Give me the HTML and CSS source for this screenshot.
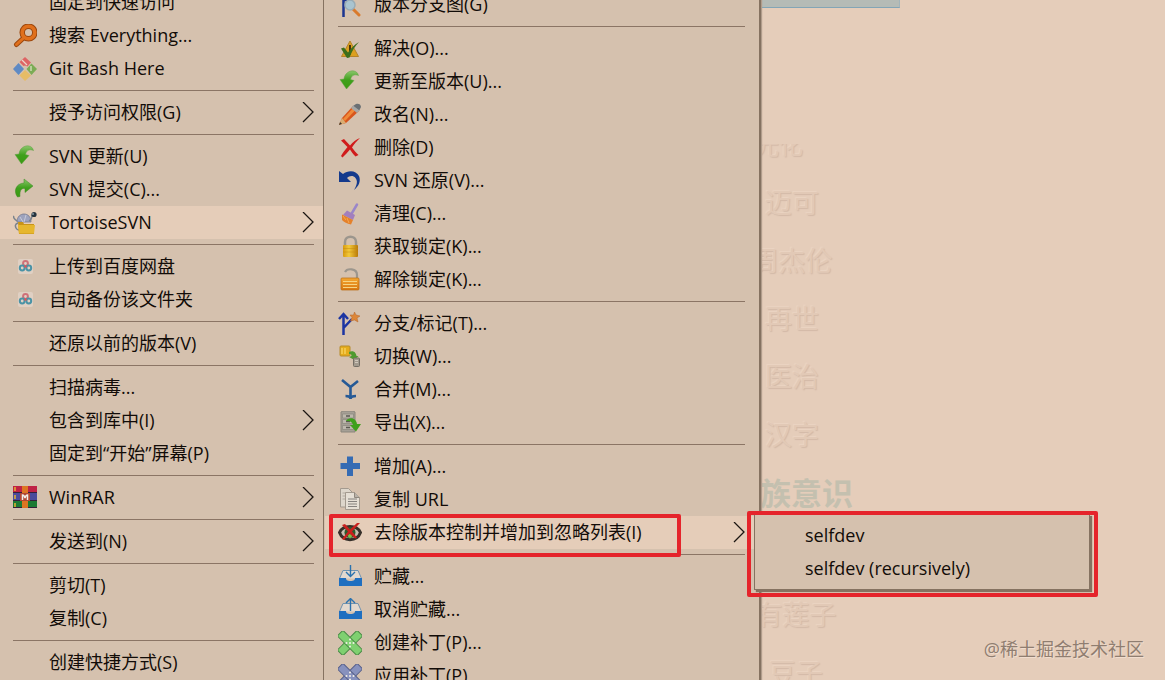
FILE: index.html
```html
<!DOCTYPE html>
<html lang="zh-CN">
  <head>
    <meta charset="utf-8" />
    <meta name="viewport" content="width=device-width, initial-scale=1" />
    <link rel="stylesheet" href="styles.css">
    <title>TortoiseSVN</title>
  </head>
  <body>
    <!-- Shared icons -->
    <svg class="sprite" aria-hidden="true">
      <defs>
        <linearGradient id="green" x1="0" y1="0" x2="0" y2="1">
          <stop offset="0" stop-color="#8cc66c" />
          <stop offset="0.5" stop-color="#3fa01c" />
          <stop offset="1" stop-color="#3c9a12" />
        </linearGradient>
        <linearGradient id="gold" x1="0" y1="0" x2="1" y2="0">
          <stop offset="0" stop-color="#d79a10" />
          <stop offset="0.4" stop-color="#f3c93a" />
          <stop offset="1" stop-color="#b97a08" />
        </linearGradient>
        <linearGradient id="orange" x1="0" y1="0" x2="0" y2="1">
          <stop offset="0" stop-color="#f3a733" />
          <stop offset="1" stop-color="#d9780f" />
        </linearGradient>
      </defs>
      <symbol id="chevron" viewBox="0 0 12 22">
        <path d="M1 0l10 10L1 20" fill="none" stroke="#1c1612" stroke-width="1.3" />
      </symbol>
      <symbol id="update" viewBox="0 0 24 24">
        <path d="M2 9.500l4-.5C6.500 4 11 0 16 1c2 .3 3.500 1.500 4.500 4.500C17 4 13.500 5 12.500 9.500l3.500 1L8.500 19z" fill="url(#green)" stroke="#5ea045" stroke-width=".5" />
      </symbol>
      <symbol id="commit" viewBox="0 0 24 24">
        <path d="M11 1l9 7-8 6.500v-4C8.500 10 6.500 12 7 18.500L4.500 19C0 13 3 5.500 11 5z" fill="url(#green)" stroke="#3d8a24" stroke-width=".5" />
      </symbol>
      <symbol id="netdisk" viewBox="0 0 24 24">
        <rect x="5" y="4" width="15" height="15" rx="2" fill="#e0d0c3" />
        <g fill="none" stroke-width="2">
          <circle cx="12.500" cy="8.500" r="2.400" stroke="#cf7078" />
          <circle cx="9.200" cy="13" r="2.400" stroke="#4a93a6" />
          <circle cx="15.800" cy="13" r="2.400" stroke="#4a93a6" />
        </g>
        <circle cx="12.500" cy="11.500" r="1.300" fill="#d9545c" />
      </symbol>
      <symbol id="patch" viewBox="0 0 24 24">
        <rect x="8" y="-2" width="8" height="28" rx="1.500" transform="rotate(45 12 12)" />
        <rect x="8" y="-2" width="8" height="28" rx="1.500" transform="rotate(-45 12 12)" />
        <g fill="#f4efe8" stroke="none">
          <circle cx="12" cy="8.500" r="1" /><circle cx="8.500" cy="12" r="1" /><circle cx="12" cy="12" r="1" />
          <circle cx="15.500" cy="12" r="1" /><circle cx="12" cy="15.500" r="1" />
        </g>
      </symbol>
    </svg>

    <!-- Wallpaper behind the menus -->
    <main class="desktop">
      <div class="tab"></div>
      <ul class="words">
        <li class="words__cut">光化</li>
        <li>迈可</li>
        <li>周杰伦</li>
        <li>再世</li>
        <li>医治</li>
        <li>汉字</li>
        <li class="words__strong">族意识</li>
        <li class="words__gap"></li>
        <li class="words__shift">有莲子</li>
        <li class="words__shift">豆子</li>
      </ul>
      <p class="credit">@稀土掘金技术社区</p>
    </main>

    <!-- Explorer menu -->
    <ul class="menu menu--main">
      <li><button type="button"><span class="icon"></span>固定到快速访问</button></li>
      <li><button type="button">
        <svg class="icon" viewBox="0 0 24 24">
          <path d="M10.500 14L3.500 20.500" stroke="#9c480f" stroke-width="5" stroke-linecap="round" />
          <circle cx="15.500" cy="8.500" r="6.300" fill="none" stroke="#9c480f" stroke-width="5.500" />
          <path d="M10.500 14L3.500 20.500" stroke="#e0701c" stroke-width="3" stroke-linecap="round" />
          <circle cx="15.500" cy="8.500" r="6.300" fill="none" stroke="#e0701c" stroke-width="3.500" />
        </svg>搜索 Everything...</button></li>
      <li><button type="button">
        <svg class="icon" viewBox="0 0 24 24">
          <path d="M6.500 5L12 0l6 5.500-3.500 4L12 8.500 10.500 9z" fill="#de6464" />
          <path d="M5.500 6l5.500 6-5.500 6L0 12z" fill="#5f8ac4" />
          <path d="M18.500 6.500l5.500 5.500-5.500 6L13.500 12z" fill="#7bac55" />
          <path d="M12 13l6 5.500L12 24l-5.500-5.500z" fill="#e6bc66" />
          <path d="M9 3l5 5" fill="none" stroke="#ecd5c8" stroke-width="1.300" />
          <path d="M18 9v5" fill="none" stroke="#dce0c4" stroke-width="1.300" />
        </svg>Git Bash Here</button></li>
      <li class="separator"></li>
      <li><button type="button"><span class="icon"></span>授予访问权限(G)<svg class="chevron"><use href="#chevron" /></svg></button></li>
      <li class="separator"></li>
      <li><button type="button"><svg class="icon"><use href="#update" /></svg>SVN 更新(U)</button></li>
      <li><button type="button"><svg class="icon"><use href="#commit" /></svg>SVN 提交(C)...</button></li>
      <li class="active"><button type="button">
        <svg class="icon" viewBox="0 0 24 24">
          <path d="M4 11C4 5 8 3 11 3c4 0 7 3 7 8z" fill="#9ea3bd" stroke="#73788e" stroke-width=".8" />
          <path d="M7 6l3 5m3-7l-2 7" stroke="#c7cadb" />
          <path d="M4 10C1 8 0 6 1 5M5 12c-3 1-3 3-2 5 1 2 2 2 3 2M16 10c2-1 3-4 3-6" fill="none" stroke="#7b838c" stroke-width="1.500" />
          <circle cx="21" cy="3.500" r="2.600" fill="#26343f" />
          <circle cx="20" cy="3" r="1" fill="#8296a2" />
          <path d="M5 11h5l1 2h10v10H6z" fill="#c99418" />
          <path d="M5 14h17l-1 8.500H6z" fill="#e6b62e" />
        </svg>TortoiseSVN<svg class="chevron"><use href="#chevron" /></svg></button></li>
      <li class="separator"></li>
      <li><button type="button"><svg class="icon"><use href="#netdisk" /></svg>上传到百度网盘</button></li>
      <li><button type="button"><svg class="icon"><use href="#netdisk" /></svg>自动备份该文件夹</button></li>
      <li class="separator"></li>
      <li><button type="button"><span class="icon"></span>还原以前的版本(V)</button></li>
      <li class="separator"></li>
      <li><button type="button"><span class="icon"></span>扫描病毒...</button></li>
      <li><button type="button"><span class="icon"></span>包含到库中(I)<svg class="chevron"><use href="#chevron" /></svg></button></li>
      <li><button type="button"><span class="icon"></span>固定到“开始”屏幕(P)</button></li>
      <li class="separator"></li>
      <li><button type="button">
        <svg class="icon" viewBox="0 0 24 24">
          <rect width="24" height="7" fill="#bf2245" />
          <rect y="7" width="24" height="8" fill="#4a4a9c" />
          <rect y="15" width="24" height="7" fill="#1c7a34" />
          <path d="M0 6.500h24M0 14.500h24M0 21.500h24" stroke="#33203a" />
          <path d="M2 1v4m0 4v4m0 4v4" stroke="#e5b431" stroke-width="1.500" />
          <rect x="9" width="6" height="22" fill="#dd7522" />
          <rect x="7" y="7" width="10" height="8" fill="#b14632" />
          <path d="M9.500 14V9c1.500 0 2 1 2.500 3 .5-2 1-3 2.500-3v5" fill="none" stroke="#f1eee9" stroke-width="1.500" />
        </svg>WinRAR<svg class="chevron"><use href="#chevron" /></svg></button></li>
      <li class="separator"></li>
      <li><button type="button"><span class="icon"></span>发送到(N)<svg class="chevron"><use href="#chevron" /></svg></button></li>
      <li class="separator"></li>
      <li><button type="button"><span class="icon"></span>剪切(T)</button></li>
      <li><button type="button"><span class="icon"></span>复制(C)</button></li>
      <li class="separator"></li>
      <li><button type="button"><span class="icon"></span>创建快捷方式(S)</button></li>
    </ul>

    <!-- TortoiseSVN menu -->
    <ul class="menu menu--svn">
      <li><button type="button">
        <svg class="icon" viewBox="0 0 24 24">
          <path d="M5.500 0v24M5 7h10M12 0v5" fill="none" stroke="#1c3590" stroke-width="2.500" />
          <path d="M15 16l6 6" stroke="#d97a2c" stroke-width="3" stroke-linecap="round" />
          <circle cx="12" cy="12" r="5" fill="#a9c4d0" stroke="#9aacb5" stroke-width="1.500" />
        </svg>版本分支图(G)</button></li>
      <li class="separator"></li>
      <li><button type="button">
        <svg class="icon" viewBox="0 0 24 24">
          <path d="M12 4l8.500 15.500h-17z" fill="#dba021" stroke="#b5832a" />
          <path d="M12 8v6m0 1.500v2" stroke="#4a340c" stroke-width="2" />
          <path d="M3 11.500l3-1 4 5C13 11 16 8 21 5c-4 4-7 9-9.500 15.500L9 21z" fill="#3c6e1b" />
        </svg>解决(O)...</button></li>
      <li><button type="button"><svg class="icon"><use href="#update" /></svg>更新至版本(U)...</button></li>
      <li><button type="button">
        <svg class="icon" viewBox="0 0 24 24">
          <path d="M1 22l3-7L15 3l6 5L8 20z" fill="#d8551c" />
          <path d="M5 16L16 4l2.500 2L7 18z" fill="#f08a3a" />
          <path d="M15 3l3-2c2-1 5 0 5 3l-2 4z" fill="#6b7074" />
          <path d="M13 5l2-2.500 6.500 5L19 10z" fill="#a6a7a6" />
          <path d="M1 22l3-7 4 5z" fill="#d9ae73" />
          <path d="M1 22l1-3 2 1.800z" fill="#3c342b" />
        </svg>改名(N)...</button></li>
      <li><button type="button">
        <svg class="icon" viewBox="0 0 24 24">
          <path d="M3 4.500L6 3c2 2 4 4.500 6 6.500C15 6 18 3.500 22 2c-3 3-6 6-8 9.500 2 3 4 5 6.500 7.500l-3 1.500C15 18 13.500 16 12 13.500 9.500 16.500 7 19 4.500 21.500L3 20c2-3.500 4-6 6.500-9C7 8.500 5 6.500 3 4.500z" fill="#d01c1c" />
        </svg>删除(D)</button></li>
      <li><button type="button">
        <svg class="icon" viewBox="0 0 24 24">
          <path d="M1 2l4 3c5-4 13-4 16 2 2 5 0 10-5 14 3-5 4-9 1.500-12C15 6 11 7 9 9l4 4H1z" fill="#153a8c" />
        </svg>SVN 还原(V)...</button></li>
      <li><button type="button">
        <svg class="icon" viewBox="0 0 24 24">
          <path d="M19 2.500L14 11" stroke="#9a86c9" stroke-width="2.500" stroke-linecap="round" />
          <path d="M9 8.500l8 4.500-2 5-10-5z" fill="#a27fbe" />
          <path d="M4 12.500l11 5.500-2 4.500C9 22 6 20 4 18z" fill="#e5812a" />
          <path d="M5 14l3 4m1-2l2 5" stroke="#f3a752" />
        </svg>清理(C)...</button></li>
      <li><button type="button">
        <svg class="icon" viewBox="0 0 24 24">
          <path d="M7 12V7c0-7 11-7 11 0v5" fill="none" stroke="#9c968d" stroke-width="2.500" />
          <rect x="5" y="10" width="15" height="12" rx="1" fill="url(#gold)" />
          <path d="M5 13.500h15M5 17h15" stroke="#c4890e" stroke-width=".5" />
        </svg>获取锁定(K)...</button></li>
      <li><button type="button">
        <svg class="icon" viewBox="0 0 24 24">
          <path d="M7 4c2-4 12-4 12 3v4" fill="none" stroke="#9c968d" stroke-width="2.200" />
          <rect x="3" y="10" width="18" height="12" rx="1" fill="url(#orange)" stroke="#ba6a10" stroke-width=".7" />
          <path d="M5 13.500h14M5 16.500h14M5 19.500h14" stroke="#f6d483" />
        </svg>解除锁定(K)...</button></li>
      <li class="separator"></li>
      <li><button type="button">
        <svg class="icon" viewBox="0 0 24 24">
          <path d="M5.500 23V2M1 7l4.500-5L10 7M5.500 16L14 7" fill="none" stroke="#1c35a2" stroke-width="2.500" />
          <path d="M16.500 0l1.500 3 4 1-3 2 1 4-3.500-2-4 1 1.500-3.500L12 3h3.500z" fill="#dd8638" stroke="#b5642b" stroke-width=".5" />
        </svg>分支/标记(T)...</button></li>
      <li><button type="button">
        <svg class="icon" viewBox="0 0 24 24">
          <rect x="2" y="1" width="10" height="10" rx="1" fill="#e5ac1c" stroke="#b68b2a" />
          <path d="M4 3v6m3-6v6" stroke="#f6cf5b" stroke-width="1.500" />
          <path d="M11 7c5-2 7 1 7.500 4h2L16.500 15 11 12l2.500-1c0-2-1-2-2.500-2z" fill="#4e9a30" />
          <rect x="15.500" y="13" width="6" height="8.500" rx="1" fill="#a29a8e" stroke="#746e65" />
          <path d="M17 15.500h3m-3 2h3" stroke="#cfc7bc" />
        </svg>切换(W)...</button></li>
      <li><button type="button">
        <svg class="icon" viewBox="0 0 24 24">
          <path d="M4 2l8.500 7L20 3M12.500 8v13M7.500 18c3 0 5 1 5 3 0-2 2-3 5.500-3" fill="none" stroke="#265a96" stroke-width="2.600" />
        </svg>合并(M)...</button></li>
      <li><button type="button">
        <svg class="icon" viewBox="0 0 24 24">
          <path d="M3 1l2-1h10l2 1v20H3z" fill="#a59f95" stroke="#8b867c" />
          <path d="M4.500 3h11v4h-11zm0 5.500h11v4h-11zm0 6h11v4h-11z" fill="#bdb7ac" stroke="#8b867c" stroke-width=".7" />
          <path d="M8 5h4m-4 5.500h4m-4 6h4" stroke="#5a5750" stroke-width="1.500" />
          <path d="M8 10c2-4 10-4 11 3h4l-5 7.500-6-6.500h3c-1-4-4-4-7-4z" fill="#3fa01c" />
        </svg>导出(X)...</button></li>
      <li class="separator"></li>
      <li><button type="button">
        <svg class="icon" viewBox="0 0 24 24">
          <path d="M9 1.500h6V8h7v6h-7v7H9v-7H2.500V8H9z" fill="#356bb3" />
        </svg>增加(A)...</button></li>
      <li><button type="button">
        <svg class="icon" viewBox="0 0 24 24">
          <path d="M2.500 .5h8l4 4V19h-12z" fill="#ddd6cb" stroke="#a39a8f" />
          <path d="M4.500 5h6m-6 3h4m-4 3h4" stroke="#b0a99f" />
          <path d="M7.500 4.500h9l5 5v12h-14z" fill="#e5dfd5" stroke="#a39a8f" />
          <path d="M16.500 4.500v5h5" fill="#b8b1a8" stroke="#8f877d" />
          <path d="M10 11h9m-9 2.500h9M10 16h9m-9 2.500h9" stroke="#85827f" />
        </svg>复制 URL</button></li>
      <li class="active"><button type="button">
        <svg class="icon" viewBox="0 0 24 24">
          <path d="M1.500 11.500C5 3.500 19 3.500 22.500 11.500 19 21 5 21 1.500 11.500z" fill="#c7bcb0" stroke="#37302a" stroke-width="3" />
          <circle cx="12" cy="11.500" r="5.500" fill="#2b5c2d" />
          <circle cx="12" cy="15" r="2" fill="#7ac04b" />
          <path d="M4 4l3-1 5 5.500L19 2h3l-8 8.500 5 6-2 1-5.500-5L6 19l-2-1 6-7.500z" fill="#c9201e" />
        </svg>去除版本控制并增加到忽略列表(I)<svg class="chevron"><use href="#chevron" /></svg></button>

        <!-- Ignore menu -->
        <ul class="menu menu--ignore">
          <li><button type="button"><span class="icon"></span>selfdev</button></li>
          <li><button type="button"><span class="icon"></span>selfdev (recursively)</button></li>
        </ul>
      </li>
      <li class="separator"></li>
      <li><button type="button">
        <svg class="icon" viewBox="0 0 24 24">
          <path d="M1.500 13.500L5 5.500h15l3.500 8" fill="#e2d9cf" stroke="#6f93b0" />
          <path d="M1 13h7c0 2 1 3 4.500 3s4.500-1 4.500-3h7v8H1z" fill="#1f6fc0" />
          <path d="M12.500 0v11M8 7l4.500 4.500L17 7" fill="none" stroke="#2a72ae" stroke-width="1.400" />
        </svg>贮藏...</button></li>
      <li><button type="button">
        <svg class="icon" viewBox="0 0 24 24">
          <path d="M1.500 13.500L5 5.500h15l3.500 8" fill="#e2d9cf" stroke="#6f93b0" />
          <path d="M1 13h7c0 2 1 3 4.500 3s4.500-1 4.500-3h7v8H1z" fill="#1f6fc0" />
          <path d="M12.500 13V1M8 5L12.500 .5 17 5" fill="none" stroke="#2a72ae" stroke-width="1.400" />
        </svg>取消贮藏...</button></li>
      <li><button type="button"><svg class="icon icon--green"><use href="#patch" /></svg>创建补丁(P)...</button></li>
      <li><button type="button"><svg class="icon icon--blue"><use href="#patch" /></svg>应用补丁(P)</button></li>
    </ul>

    <!-- Red marks -->
    <div class="mark mark--item"></div>
    <div class="mark mark--list"></div>
  </body>
</html>
```
FILE: styles.css
```css
*, *::before, *::after {
  box-sizing: border-box;
}

html, body {
  margin: 0;
  height: 100%;
  overflow: hidden;
}

body {
  position: relative;
  background: #e5cdba;
  color: #120c08;
  font-family: 'Open Sans', 'Noto Sans CJK SC', sans-serif;
  font-size: 18px;
}

ul {
  margin: 0;
  padding: 0;
  list-style: none;
}

.sprite {
  position: absolute;
  width: 0;
  height: 0;
}

/* Wallpaper */
.desktop {
  height: 100%;
  padding-left: 732px;
}

.tab {
  width: 168px;
  height: 8px;
  background: #b5bbb6;
  border-bottom: 1px solid #83a5b6;
  border-right: 1px solid #a3b4ba;
}

.words {
  width: 120px;
  padding-top: 108px;
  color: #e2c9b6;
  font-size: 27px;
  line-height: 58px;
  text-align: center;
  text-shadow: 1px 1px 1px #d3baa8, -1px -1px 1px #ead4c3;
}

.words li {
  height: 58px;
  white-space: nowrap;
}

/* Only the foot of the first word shows */
.words .words__cut {
  height: 46px;
  margin-bottom: 12px;
  padding: 17px 26px 0 0;
  font-size: 24px;
  line-height: 24px;
  clip-path: inset(28px 0 0 0);
}

.words .words__strong {
  padding-left: 28px;
  color: #c4c0af;
  font-size: 31px;
  font-weight: 700;
  text-shadow: none;
}

.words .words__gap {
  height: 64px;
}

.words .words__shift {
  padding-left: 8px;
}

.credit {
  position: absolute;
  right: 21px;
  bottom: 18px;
  margin: 0;
  color: #8f7d70;
  font-size: 18px;
  line-height: 26px;
  text-shadow: 1px 1px 0 #f1ddce;
}

/* Menus */
.menu {
  position: absolute;
  background: #d5c1ae;
}

.menu li {
  position: relative;
}

.menu button {
  display: flex;
  align-items: center;
  width: 100%;
  padding: 0 9px 0 13px;
  border: 0;
  background: none;
  color: inherit;
  font: inherit;
  line-height: 33px;
  text-align: left;
  white-space: nowrap;
}

.menu .active > button {
  background: #e5cdb9;
}

.menu .separator {
  height: 11px;
  padding: 5px 9px 0 13px;
}

.separator::before {
  content: '';
  display: block;
  border-top: 1px solid #8b7565;
}

.icon {
  flex: none;
  width: 24px;
  height: 24px;
  margin-right: 12px;
}

.icon--green {
  fill: #7fd070;
  stroke: #4c8a48;
}

.icon--blue {
  fill: #8791bd;
  stroke: #59618a;
}

.chevron {
  flex: none;
  width: 12px;
  height: 22px;
  margin-left: auto;
}

.menu--main {
  top: -14px;
  left: 0;
  width: 323px;
  padding-bottom: 16px;
}

.menu--svn {
  top: -12px;
  left: 323px;
  width: 437px;
  padding: 0 5px 16px 1px;
  border: 1px solid #857261;
  border-width: 0 1px;
  box-shadow: 1px 0 0 #857261, 2px 0 1px #b09c8b;
}

.menu--ignore {
  top: -2px;
  left: 100%;
  width: 336px;
  padding: 4px 1px;
  border: 1px solid #857261;
  box-shadow: 2px 2px 1px #857261;
}

/* Red marks */
.mark {
  position: absolute;
  border: 4px solid #e5242b;
  border-radius: 2px;
  pointer-events: none;
}

.mark--item {
  top: 514px;
  left: 329px;
  width: 352px;
  height: 43px;
}

.mark--list {
  top: 511px;
  left: 747px;
  width: 351px;
  height: 86px;
}
```
